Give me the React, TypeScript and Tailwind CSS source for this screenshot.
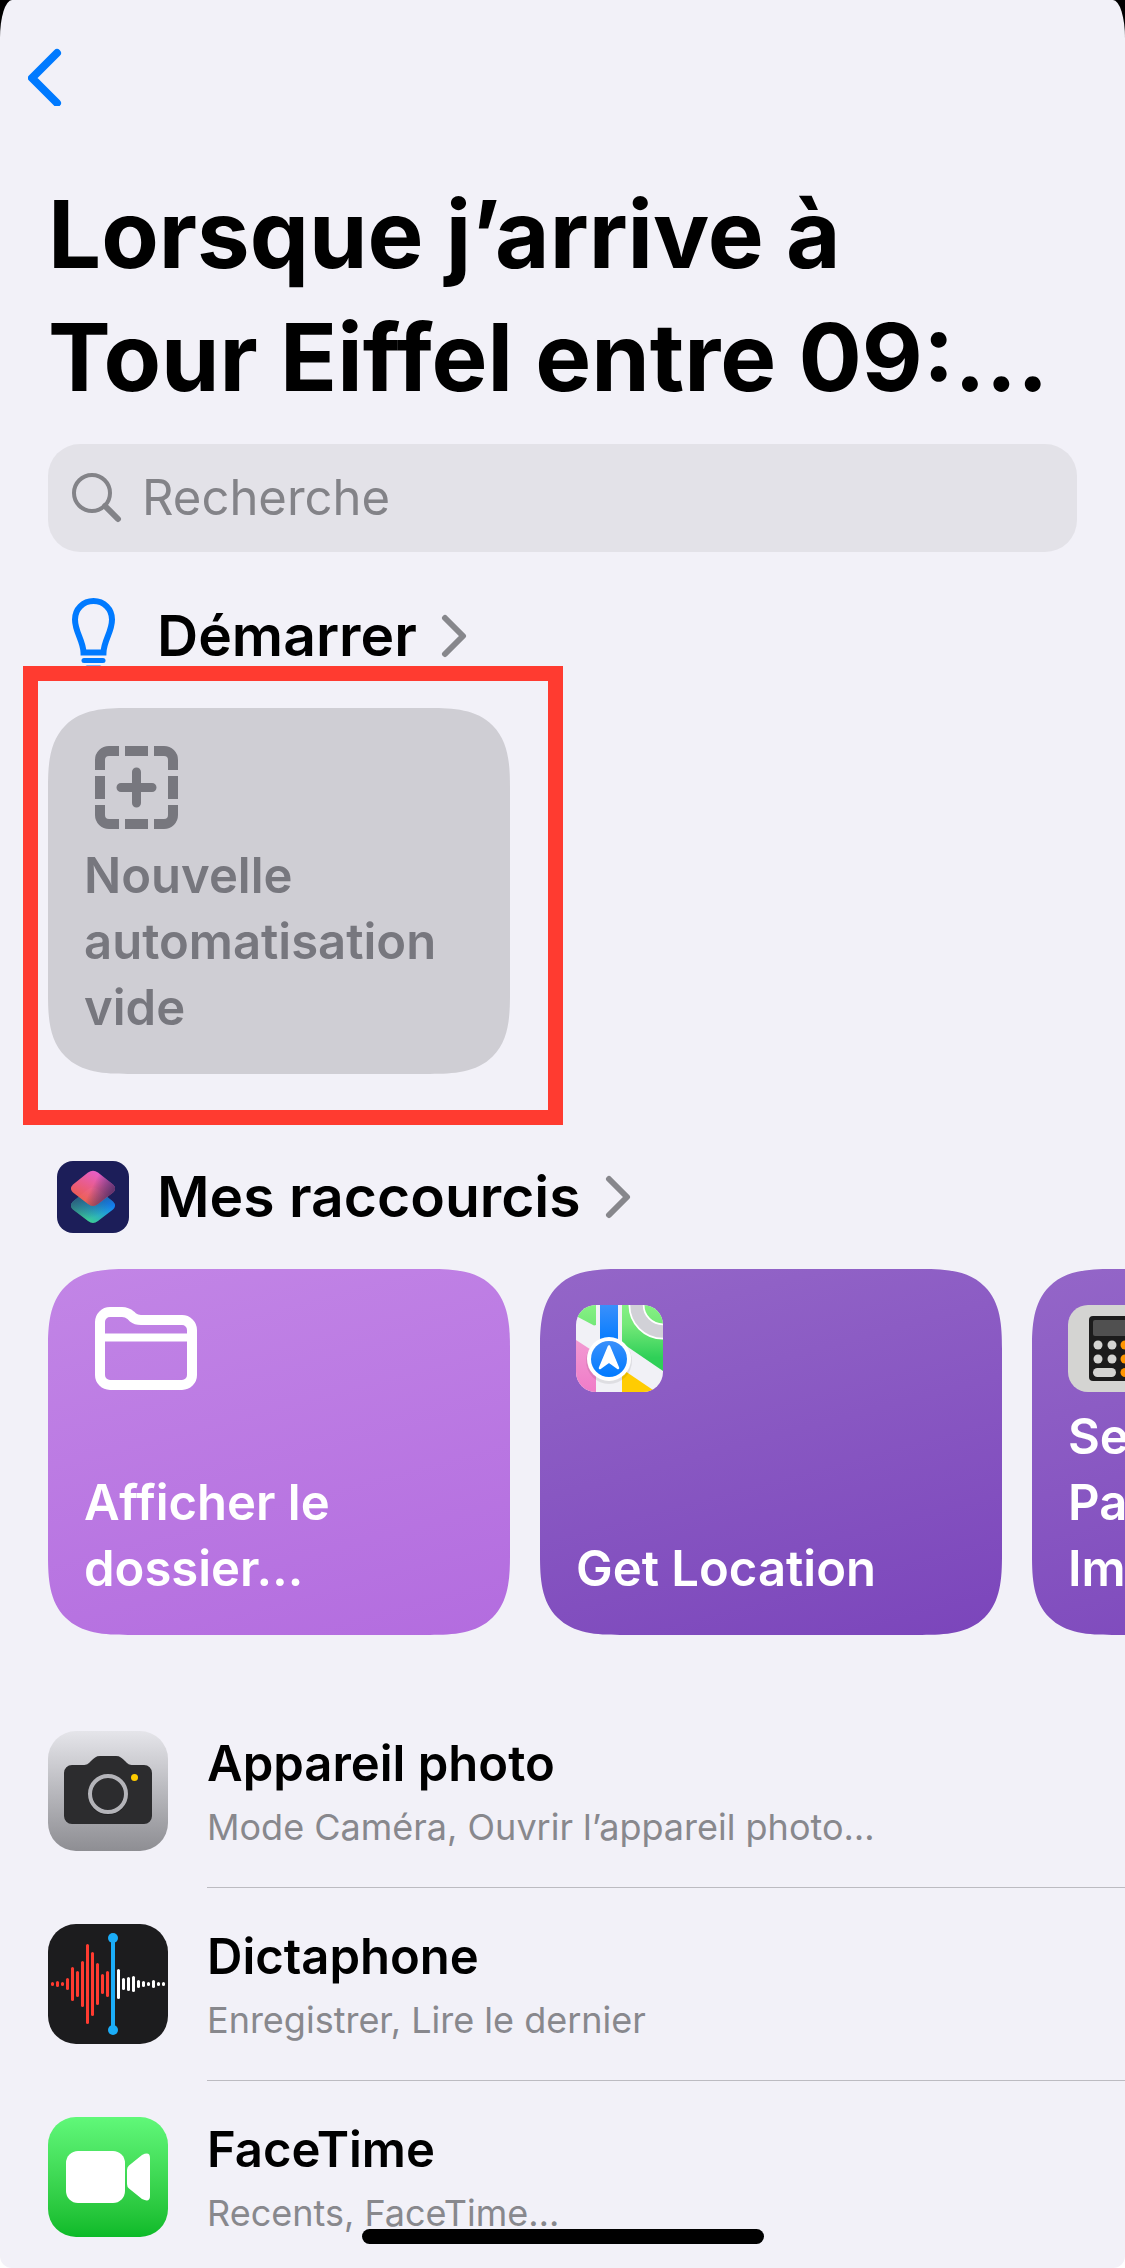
import type React from 'react'

function BackIcon() {
  return (
    <svg viewBox="0 0 34 58" className="h-[58px] w-[34px]" fill="none" aria-hidden="true">
      <path
        d="M29 5 4 30l25 25"
        stroke="#007aff"
        strokeWidth="8"
        strokeLinecap="round"
        strokeLinejoin="round"
      />
    </svg>
  )
}

function SearchIcon() {
  return (
    <svg viewBox="0 0 50 50" className="h-[50px] w-[50px] shrink-0" fill="none" aria-hidden="true">
      <circle cx="20" cy="20" r="18" stroke="#838388" strokeWidth="4" />
      <path d="m33 33 13 13" stroke="#838388" strokeWidth="6" strokeLinecap="round" />
    </svg>
  )
}

function ChevronIcon() {
  return (
    <svg viewBox="0 0 26 44" className="h-11 w-[26px]" fill="none" aria-hidden="true">
      <path
        d="m4 4 18 18L4 40"
        stroke="#87878c"
        strokeWidth="6"
        strokeLinecap="round"
        strokeLinejoin="round"
      />
    </svg>
  )
}

function BulbIcon() {
  return (
    <svg
      viewBox="0 0 72 72"
      className="h-[72px] w-[72px] overflow-visible"
      fill="none"
      stroke="#007aff"
      aria-hidden="true"
    >
      <path
        d="M26.500 52.500C26 40 18 32 18 19.500C18 9 26 1 36.500 1S55 9 55 19.500C55 32 47 40 46.500 52.500Z"
        strokeWidth="6"
      />
      <path d="M27 60.500h19" strokeWidth="5" strokeLinecap="round" />
      <path d="M30 67.500h13" strokeWidth="4" strokeLinecap="round" />
    </svg>
  )
}

function ShortcutsIcon() {
  return (
    <svg viewBox="0 0 72 72" className="h-[72px] w-[72px] rounded-2xl bg-[#1c1e59]" aria-hidden="true">
      <defs>
        <linearGradient id="sc-top" x1="0.1" y1="0.8" x2="0.6" y2="0">
          <stop offset="0" stopColor="#ff6047" />
          <stop offset="1" stopColor="#f764d6" />
        </linearGradient>
        <linearGradient id="sc-fade" x1="0.5" y1="0.4" x2="1" y2="0.6">
          <stop offset="0" stopColor="#1c1e59" stopOpacity="0" />
          <stop offset="1" stopColor="#4a2c63" stopOpacity="0.9" />
        </linearGradient>
        <linearGradient id="sc-bottom" x1="0.4" y1="1" x2="0.8" y2="0.4">
          <stop offset="0" stopColor="#3fd08f" />
          <stop offset="1" stopColor="#0f82ff" />
        </linearGradient>
        <linearGradient id="sc-shade" x1="0.1" y1="0.3" x2="0.4" y2="0.9">
          <stop offset="0" stopColor="#2c5570" stopOpacity="0.9" />
          <stop offset="1" stopColor="#2c5570" stopOpacity="0" />
        </linearGradient>
        <path
          id="sc-tile"
          d="M31 11.500q5-3.500 10 0l15 12q4 4 0 8L41 43q-5 4-10 0L16 31.500q-4-4 0-8Z"
        />
      </defs>
      <g transform="translate(0 17)">
        <use href="#sc-tile" fill="url(#sc-bottom)" />
        <use href="#sc-tile" fill="url(#sc-shade)" />
      </g>
      <use href="#sc-tile" fill="url(#sc-top)" opacity="0.92" />
      <use href="#sc-tile" fill="url(#sc-fade)" />
    </svg>
  )
}

function NewAutomationIcon() {
  return (
    <svg
      viewBox="0 0 116 87"
      className="h-[87px] w-[116px]"
      fill="none"
      stroke="#77777e"
      strokeWidth="10"
      aria-hidden="true"
    >
      <path d="M35 7H25a9 9 0 0 0-9 9v10M16 32v23M16 61v10a9 9 0 0 0 9 9h10" />
      <path d="M70 7h10a9 9 0 0 1 9 9v10M89 32v23M89 61v10a9 9 0 0 1-9 9H70" />
      <path d="M41 7h23M41 80h23" />
      <path d="M52.500 28v31M37 43.500h31" strokeWidth="9" strokeLinecap="round" />
    </svg>
  )
}

function FolderIcon() {
  return (
    <svg viewBox="0 0 116 87" className="h-[87px] w-[116px]" fill="none" stroke="#fff" aria-hidden="true">
      <path
        d="M16 17a10 10 0 0 1 10-10H38c4 0 6 1 9 3.500l2 2c2.500 2 4.500 2.500 8 2.500H98a10 10 0 0 1 10 10V70a10 10 0 0 1-10 10H26a10 10 0 0 1-10-10Z"
        strokeWidth="10"
      />
      <path d="M16 32.500h92" strokeWidth="8" />
    </svg>
  )
}

function MapsIcon() {
  return (
    <svg viewBox="0 0 87 87" className="h-[87px] w-[87px] rounded-[20px] bg-[#f1f1f6]" aria-hidden="true">
      <defs>
        <linearGradient id="map-green" x1="0" y1="0" x2="0" y2="66" gradientUnits="userSpaceOnUse">
          <stop offset="0" stopColor="#86f184" />
          <stop offset="0.3" stopColor="#74e878" />
          <stop offset="0.8" stopColor="#2fd058" />
        </linearGradient>
        <linearGradient id="map-blue" x1="0" y1="0" x2="0" y2="1">
          <stop offset="0" stopColor="#3a90fb" />
          <stop offset="1" stopColor="#007aff" />
        </linearGradient>
        <linearGradient id="map-pink" x1="0" y1="0" x2="0" y2="1">
          <stop offset="0" stopColor="#f29ad2" />
          <stop offset="1" stopColor="#f07cc8" />
        </linearGradient>
      </defs>
      <path d="M0 0h20v20l-2 0.500L0 11Z" fill="url(#map-green)" />
      <path d="M46 0h41v66L46 38Z" fill="url(#map-green)" />
      <circle cx="87" cy="0" r="26.500" fill="none" stroke="#fff" strokeWidth="16" />
      <circle cx="87" cy="0" r="26.500" fill="none" stroke="#d1d1d7" strokeWidth="12.500" />
      <path d="M0 35l20 13v39H0Z" fill="url(#map-pink)" />
      <path d="M46 64l34 23H46Z" fill="#ffcc02" />
      <path d="M24 0h18v40H24Z" fill="url(#map-blue)" />
      <circle cx="33" cy="56" r="23" fill="#000" opacity="0.08" />
      <circle cx="33" cy="54" r="22" fill="#fff" />
      <circle cx="33" cy="54" r="18" fill="url(#map-blue)" />
      <path
        d="M33 41.500 42 63l-9-6.500L24 63Z"
        fill="#fff"
        stroke="#fff"
        strokeWidth="2.500"
        strokeLinejoin="round"
      />
    </svg>
  )
}

function CalculatorIcon() {
  return (
    <svg viewBox="0 0 87 87" className="h-[87px] w-[87px] rounded-[20px] bg-[#d4d4d2]" aria-hidden="true">
      <rect x="21" y="11" width="46" height="65" rx="4" fill="#1c1c1c" />
      <rect x="25" y="15" width="38" height="16" rx="2" fill="#505050" />
      <g fill="#d4d4d2">
        <circle cx="30" cy="40" r="4.500" />
        <circle cx="44" cy="40" r="4.500" />
        <circle cx="30" cy="54" r="4.500" />
        <circle cx="44" cy="54" r="4.500" />
        <rect x="25" y="63" width="23" height="9" rx="4.500" />
      </g>
      <g fill="#ff9500">
        <circle cx="57" cy="40" r="4.500" />
        <circle cx="57" cy="54" r="4.500" />
        <circle cx="57" cy="67.500" r="4.500" />
      </g>
    </svg>
  )
}

function CameraIcon() {
  return (
    <svg
      viewBox="0 0 120 120"
      className="h-[120px] w-[120px] shrink-0 rounded-[28px] bg-linear-to-b from-[#e5e5ea] to-[#8e8e93]"
      aria-hidden="true"
    >
      <path
        d="M24 34h11c4 0 5-1 8-4 3-3 5-5 9-5h16c4 0 6 2 9 5 3 3 4 4 8 4h11a8 8 0 0 1 8 8v43a8 8 0 0 1-8 8H24a8 8 0 0 1-8-8V42a8 8 0 0 1 8-8Z"
        fill="#2c2c2e"
      />
      <circle cx="60" cy="64" r="20" fill="#000" opacity="0.25" />
      <circle cx="60" cy="63" r="18" fill="#2c2c2e" stroke="#b4b4b9" strokeWidth="4" />
      <circle cx="86.500" cy="46.500" r="3.500" fill="#ffcc00" />
    </svg>
  )
}

const redBars = [2, 3, 2, 6, 17, 13, 23, 40, 32, 21, 10, 13]
const whiteBars = [15, 6, 7, 8, 4, 3, 2, 4, 2, 2]

function VoiceMemosIcon() {
  return (
    <svg
      viewBox="0 0 120 120"
      className="h-[120px] w-[120px] shrink-0 rounded-[28px] bg-[#1c1c1e]"
      aria-hidden="true"
    >
      {redBars.map((h, i) => (
        <rect key={i} x={3 + i * 5} y={60 - h} width="3" height={h * 2} rx="1.500" fill="#ff3b30" />
      ))}
      {whiteBars.map((h, i) => (
        <rect key={i} x={69 + i * 5} y={60 - h} width="3" height={h * 2} rx="1.500" fill="#fff" />
      ))}
      <path d="M65 14v92" stroke="#1badf8" strokeWidth="4" />
      <circle cx="65" cy="14" r="5" fill="#1badf8" />
      <circle cx="65" cy="106" r="5" fill="#1badf8" />
    </svg>
  )
}

function FaceTimeIcon() {
  return (
    <svg
      viewBox="0 0 120 120"
      className="h-[120px] w-[120px] shrink-0 rounded-[28px] bg-linear-to-b from-[#60f879] to-[#0bba28]"
      fill="#fff"
      aria-hidden="true"
    >
      <rect x="18" y="34" width="59" height="52" rx="12" />
      <path d="M79 53q0-3 2-4.500L94 38q8-4 8 3v38q0 7-8 3L81 71.500q-2-1.500-2-4.500Z" />
    </svg>
  )
}

interface SectionHeaderProps {
  icon: React.ReactNode
  title: string
}

function SectionHeader({ icon, title }: SectionHeaderProps) {
  return (
    <h2>
      <button type="button" className="flex items-center gap-7 pl-[9px]">
        {icon}
        <span className="flex items-center gap-6 text-[57px] leading-[72px] font-semibold">
          {title}
          <ChevronIcon />
        </span>
      </button>
    </h2>
  )
}

interface TileProps {
  icon: React.ReactNode
  className: string
  children: React.ReactNode
}

function Tile({ icon, className, children }: TileProps) {
  return (
    <button
      type="button"
      className={`flex h-[366px] w-[462px] shrink-0 flex-col items-start justify-between rounded-[60px] px-9 pt-9 pb-[33px] text-left text-[49px] leading-[66px] font-semibold supports-[corner-shape:squircle]:rounded-[80px] supports-[corner-shape:squircle]:[corner-shape:superellipse(1.5)] ${className}`}
    >
      {icon}
      <span>{children}</span>
    </button>
  )
}

const apps = [
  {
    name: 'Appareil photo',
    actions: 'Mode Caméra, Ouvrir l’appareil photo…',
    icon: <CameraIcon />,
  },
  {
    name: 'Dictaphone',
    actions: 'Enregistrer, Lire le dernier',
    icon: <VoiceMemosIcon />,
  },
  {
    name: 'FaceTime',
    actions: 'Recents, FaceTime…',
    icon: <FaceTimeIcon />,
  },
]

export default function App() {
  return (
    <div className="min-h-screen bg-linear-to-b from-black from-50% to-white to-50% font-['Inter','Liberation_Sans',sans-serif] text-black">
      <main className="min-h-screen overflow-hidden rounded-t-[12px_38px] rounded-b-xl bg-[#f2f1f8] px-12">
        <header className="pt-12">
          <button type="button" aria-label="Retour" className="-ml-5 block">
            <BackIcon />
          </button>
          <h1 className="mt-[67px] text-[94px] leading-[123px] font-bold">
            Lorsque j’arrive à
            <br />
            Tour Eiffel entre 09:…
          </h1>
        </header>

        <label className="mt-[25px] flex h-[108px] items-center gap-5 rounded-[32px] bg-[#e3e2e8] px-6">
          <SearchIcon />
          <input
            type="search"
            aria-label="Recherche"
            placeholder="Recherche"
            className="min-w-0 flex-1 bg-transparent text-[49px] leading-[66px] outline-none placeholder:text-[#838388]"
          />
        </label>

        <section className="mt-12">
          <SectionHeader icon={<BulbIcon />} title="Démarrer" />
          <div className="relative mt-9 w-fit">
            <Tile icon={<NewAutomationIcon />} className="bg-[#cfced4] text-[#77777e]">
              Nouvelle automatisation vide
            </Tile>
            <div className="pointer-events-none absolute -top-[42px] -right-[53px] -bottom-[51px] -left-[25px] border-[15px] border-[#ff3b30]" />
          </div>
        </section>

        <section className="mt-[87px]">
          <SectionHeader icon={<ShortcutsIcon />} title="Mes raccourcis" />
          <div className="-mr-12 mt-9 flex gap-[30px] overflow-x-auto text-white [scrollbar-width:none]">
            <Tile icon={<FolderIcon />} className="bg-linear-165 from-[#c285e6] to-[#b36cdf]">
              Afficher le dossier…
            </Tile>
            <Tile icon={<MapsIcon />} className="bg-linear-165 from-[#9466c8] to-[#7b45bb]">
              Get Location
            </Tile>
            <Tile icon={<CalculatorIcon />} className="bg-linear-165 from-[#9466c8] to-[#7b45bb]">
              Se
              <br />
              Pa
              <br />
              Im
            </Tile>
          </div>
        </section>

        <ul className="-mr-12 mt-[60px]">
          {apps.map((app) => (
            <li key={app.name} className="group">
              <button type="button" className="flex w-full items-start gap-[39px] pt-9 text-left">
                {app.icon}
                <span className="flex-1 border-b border-[#bcbbc1] pb-[30px] group-last:border-0 group-last:pb-0">
                  <span className="block text-[49px] leading-[66px] font-semibold">{app.name}</span>
                  <span className="block text-[36px] leading-[60px] text-[#88888d]">{app.actions}</span>
                </span>
              </button>
            </li>
          ))}
        </ul>
      </main>

      <div className="fixed bottom-6 left-1/2 h-[15px] w-[402px] -translate-x-1/2 rounded-full bg-black" />
    </div>
  )
}
